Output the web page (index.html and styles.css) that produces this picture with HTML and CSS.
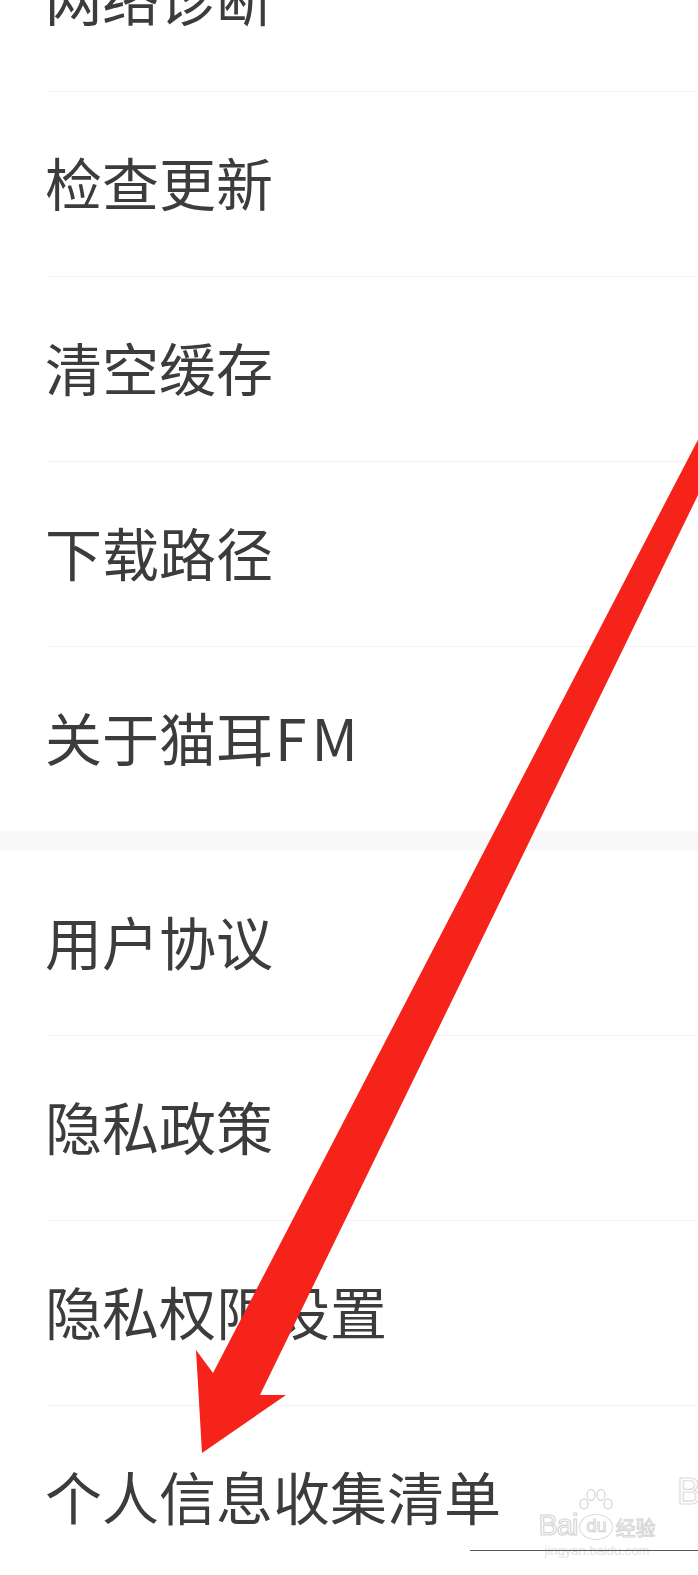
FILE: index.html
```html
<!DOCTYPE html>
<html lang="zh-CN">
<head>
<meta charset="utf-8">
<title>设置</title>
<link rel="stylesheet" href="styles.css">
</head>
<body>
<div class="page">
  <div class="list">
    <section class="group">
      <div class="row"><span class="label">网络诊断</span></div>
      <div class="row"><span class="label">检查更新</span></div>
      <div class="row"><span class="label">清空缓存</span></div>
      <div class="row"><span class="label">下载路径</span></div>
      <div class="row"><span class="label">关于猫耳<span class="latin">FM</span></span></div>
    </section>
    <div class="gap"></div>
    <section class="group">
      <div class="row"><span class="label">用户协议</span></div>
      <div class="row"><span class="label">隐私政策</span></div>
      <div class="row"><span class="label">隐私权限设置</span></div>
      <div class="row"><span class="label">个人信息收集清单</span></div>
    </section>
  </div>

  <svg class="arrow" width="698" height="1575" viewBox="0 0 698 1575" aria-hidden="true">
    <polygon points="729,380 213,1373 196,1350 202,1453 286,1395 260,1395 754,380" fill="#f5231a"/>
  </svg>

  <div class="watermark">
    <div class="wm-logo">
      <span class="wm-bai">Bai</span>
      <span class="wm-du">
        <svg class="wm-paw" width="40" height="26" viewBox="0 0 40 26">
          <ellipse cx="8" cy="16" rx="4" ry="5" fill="none" stroke="#dcdcdc" stroke-width="1.5"/>
          <ellipse cx="15" cy="7" rx="4" ry="5.5" fill="none" stroke="#dcdcdc" stroke-width="1.5"/>
          <ellipse cx="25" cy="7" rx="4" ry="5.5" fill="none" stroke="#dcdcdc" stroke-width="1.5"/>
          <ellipse cx="32" cy="16" rx="4" ry="5" fill="none" stroke="#dcdcdc" stroke-width="1.5"/>
        </svg>
        <span class="wm-circle">du</span>
      </span>
      <span class="wm-cn">经验</span>
    </div>
    <div class="wm-url">jingyan.baidu.com</div>
  </div>
  <div class="wm-line"></div>
  <div class="wm-edge">B</div>
</div>
</body>
</html>
```

FILE: styles.css
```css
html, body {
  margin: 0;
  padding: 0;
  background: #ffffff;
}

body {
  width: 698px;
  height: 1575px;
  overflow: hidden;
  font-family: "Noto Sans CJK SC", "Noto Sans", sans-serif;
}

.page {
  position: relative;
  width: 698px;
  height: 1575px;
  overflow: hidden;
}

.list {
  margin-top: -93px;
}

.group {
  display: flex;
  flex-direction: column;
}

.row {
  height: 184px;
  margin-left: 47px;
  border-bottom: 1px solid #f3f3f3;
  display: flex;
  align-items: center;
}

.group:first-child .row:last-child {
  border-bottom: none;
}

.label {
  font-size: 57px;
  line-height: 1;
  color: #3c3c3c;
  margin-left: -2px;
  margin-top: -6px;
  white-space: nowrap;
}

.latin {
  letter-spacing: 5px;
  margin-left: 2px;
}

.gap {
  height: 20px;
  background: #f8f8f8;
}

.arrow {
  position: absolute;
  left: 0;
  top: 0;
  pointer-events: none;
}

.watermark {
  position: absolute;
  left: 534px;
  top: 1494px;
  width: 126px;
  display: flex;
  flex-direction: column;
  align-items: center;
  font-family: "Liberation Sans", sans-serif;
  color: #dedede;
}

.wm-logo {
  display: flex;
  align-items: flex-end;
  height: 46px;
}

.wm-bai {
  font-size: 29px;
  line-height: 1;
  letter-spacing: -1px;
  color: transparent;
  -webkit-text-stroke: 1.2px #d6d6d6;
}

.wm-du {
  position: relative;
  display: flex;
  flex-direction: column;
  align-items: center;
  margin: 0 2px;
}

.wm-paw {
  position: absolute;
  top: -26px;
  left: -3px;
}

.wm-circle {
  width: 32px;
  height: 24px;
  border: 1.5px solid #dcdcdc;
  border-radius: 50%;
  font-size: 18px;
  line-height: 22px;
  text-align: center;
  color: transparent;
  -webkit-text-stroke: 1px #d6d6d6;
}

.wm-cn {
  font-family: "Noto Sans CJK SC", sans-serif;
  font-size: 20px;
  line-height: 1;
  color: transparent;
  -webkit-text-stroke: 1px #d6d6d6;
  margin-bottom: 2px;
}

.wm-url {
  margin-top: 4px;
  font-size: 13px;
  line-height: 1;
  color: #e2e2e2;
}

.wm-line {
  position: absolute;
  left: 470px;
  top: 1550px;
  width: 228px;
  height: 1px;
  background: #555555;
}

.wm-edge {
  position: absolute;
  left: 677px;
  top: 1474px;
  font-family: "Liberation Sans", sans-serif;
  font-size: 36px;
  line-height: 1;
  color: transparent;
  -webkit-text-stroke: 1.2px #dcdcdc;
}
```
